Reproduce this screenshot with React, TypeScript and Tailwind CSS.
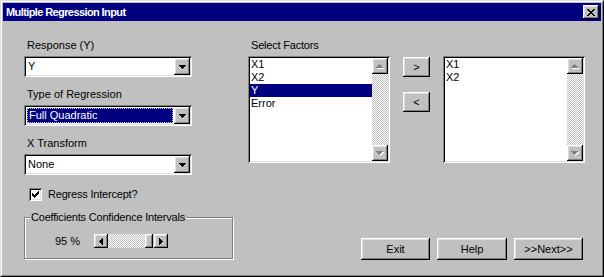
import React from "react";

const raised =
  "bg-[#c0c0c0] shadow-[inset_-1px_-1px_#000,inset_1px_1px_#fff,inset_-2px_-2px_#808080,inset_2px_2px_#dfdfdf]";
const sunken =
  "shadow-[inset_1px_1px_#808080,inset_-1px_-1px_#fff,inset_2px_2px_#000,inset_-2px_-2px_#dfdfdf]";
const dither =
  "bg-[image:repeating-conic-gradient(#fff_0%_25%,#c0c0c0_0%_50%)] bg-[length:2px_2px]";

const Pix = ({ w, h, d, color = "#000", shadow }: { w: number; h: number; d: string; color?: string; shadow?: boolean }) => (
  <svg width={w + (shadow ? 1 : 0)} height={h + (shadow ? 1 : 0)} viewBox={`0 0 ${w + (shadow ? 1 : 0)} ${h + (shadow ? 1 : 0)}`} shapeRendering="crispEdges">
    {shadow && <path d={d} fill="#fff" transform="translate(1 1)" />}
    <path d={d} fill={color} />
  </svg>
);

const DOWN = "M0 0h7v1H0zM1 1h5v1H1zM2 2h3v1H2zM3 3h1v1H3z";
const UP = "M3 0h1v1H3zM2 1h3v1H2zM1 2h5v1H1zM0 3h7v1H0z";
const LEFT = "M0 3h1v1H0zM1 2h1v3H1zM2 1h1v5H2zM3 0h1v7H3z";
const RIGHT = "M0 0h1v7H0zM1 1h1v5H1zM2 2h1v3H2zM3 3h1v1H3z";
const CLOSE =
  "M0 0h2v1H0zM6 0h2v1H6zM1 1h2v1H1zM5 1h2v1H5zM2 2h4v1H2zM3 3h2v1H3zM2 4h4v1H2zM1 5h2v1H1zM5 5h2v1H5zM0 6h2v1H0zM6 6h2v1H6z";
const CHECK =
  "M6 0h1v1H6zM5 1h2v1H5zM0 2h1v1H0zM4 2h3v1H4zM0 3h2v1H0zM3 3h3v1H3zM0 4h5v1H0zM1 5h3v1H1zM2 6h1v1H2z";

const Combo = ({ text, selected }: { text: string; selected?: boolean }) => (
  <div className={`w-[168px] h-[21px] bg-white p-[2px] flex ${sunken}`}>
    <div className="flex-1 flex p-px">
      {selected ? (
        <div className="flex-1 flex items-center bg-[#000080] text-white border border-dotted border-[#c0c0c0] pl-[1px]">
          {text}
        </div>
      ) : (
        <div className="flex-1 flex items-center pl-[1px]">{text}</div>
      )}
    </div>
    <div className={`w-[16px] h-full flex items-center justify-center ${raised}`}>
      <Pix w={7} h={4} d={DOWN} />
    </div>
  </div>
);

const ListBox = ({ items, selected }: { items: string[]; selected?: string }) => (
  <div className={`w-[142px] h-[107px] bg-white p-[2px] flex ${sunken}`}>
    <div className="flex-1 flex flex-col">
      {items.map((it) => (
        <div
          key={it}
          className={`h-[13px] leading-[13px] pl-px ${it === selected ? "bg-[#000080] text-white" : ""}`}
        >
          {it}
        </div>
      ))}
    </div>
    <div className="w-[16px] flex flex-col">
      <div className={`h-[16px] flex items-center justify-center ${raised}`}>
        <Pix w={7} h={4} d={UP} color="#808080" shadow />
      </div>
      <div className={`flex-1 ${dither}`} />
      <div className={`h-[16px] flex items-center justify-center ${raised}`}>
        <Pix w={7} h={4} d={DOWN} color="#808080" shadow />
      </div>
    </div>
  </div>
);

const Button = ({ label, className = "" }: { label: string; className?: string }) => (
  <div className={`flex items-center justify-center ${raised} ${className}`}>{label}</div>
);

export default function App() {
  return (
    <div className="w-[604px] h-[277px] bg-[#c0c0c0] border border-t-[#dfdfdf] border-l-[#dfdfdf] border-r-black border-b-black font-['Liberation_Sans',Arial,sans-serif] text-[11px] text-black select-none">
      <div className="h-full border border-t-white border-l-white border-r-[#808080] border-b-[#808080] p-px flex flex-col">
        {/* title bar */}
        <div className="h-[18px] bg-[#000080] flex items-center justify-between pl-[3px] pr-[2px]">
          <span className="text-white font-bold text-[11px] tracking-[-0.6px]">Multiple Regression Input</span>
          <div className={`w-[16px] h-[14px] flex items-center justify-center ${raised}`}>
            <Pix w={8} h={7} d={CLOSE} />
          </div>
        </div>

        {/* body */}
        <div className="flex-1 flex pl-[21px] pt-[18px]">
          {/* left column */}
          <div className="w-[209px] flex flex-col">
            <div className="h-[13px] leading-[13px] pl-[3px]">Response (Y)</div>
            <div className="mt-[4px]">
              <Combo text="Y" />
            </div>
            <div className="mt-[11px] h-[13px] leading-[13px] pl-[3px]">Type of Regression</div>
            <div className="mt-[4px]">
              <Combo text="Full Quadratic" selected />
            </div>
            <div className="mt-[11px] h-[13px] leading-[13px] pl-[3px]">X Transform</div>
            <div className="mt-[4px]">
              <Combo text="None" />
            </div>

            <div className="mt-[13px] flex items-center pl-[5px] h-[13px]">
              <div className={`w-[13px] h-[13px] bg-white flex items-center justify-center ${sunken}`}>
                <Pix w={7} h={7} d={CHECK} />
              </div>
              <span className="ml-[6px] tracking-[-0.2px]">Regress Intercept?</span>
            </div>

            <div className="mt-[16px] relative h-[42px] border border-[#808080] shadow-[inset_1px_1px_#fff,1px_1px_#fff]">
              <span className="absolute -top-[7px] left-[5px] px-px bg-[#c0c0c0] leading-[13px] tracking-[-0.2px]">
                Coefficients Confidence Intervals
              </span>
              <div className="flex items-center pl-[30px] pt-[16px]">
                <span className="w-[39px] leading-[13px]">95 %</span>
                <div className="flex h-[14px] w-[74px]">
                  <div className={`w-[14px] flex items-center justify-center ${raised}`}>
                    <Pix w={4} h={7} d={LEFT} />
                  </div>
                  <div className={`flex-1 ${dither}`} />
                  <div className={`w-[8px] ${raised}`} />
                  <div className={`w-[14px] ml-px flex items-center justify-center ${raised}`}>
                    <Pix w={4} h={7} d={RIGHT} />
                  </div>
                </div>
              </div>
            </div>
          </div>

          {/* right column */}
          <div className="ml-[15px] flex flex-col">
            <div className="h-[13px] leading-[13px] pl-[3px] tracking-[-0.2px]">Select Factors</div>
            <div className="mt-[4px] flex">
              <ListBox items={["X1", "X2", "Y", "Error"]} selected="Y" />
              <div className="ml-[13px] w-[27px] flex flex-col">
                <Button label=">" className="mt-px h-[20px]" />
                <Button label="<" className="mt-[15px] h-[20px]" />
              </div>
              <div className="ml-[13px]">
                <ListBox items={["X1", "X2"]} />
              </div>
            </div>
            <div className="mt-[75px] ml-[113px] flex gap-[7px]">
              <Button label="Exit" className="w-[69px] h-[22px]" />
              <Button label="Help" className="w-[70px] h-[22px]" />
              <Button label=">>Next>>" className="w-[69px] h-[22px]" />
            </div>
          </div>
        </div>
      </div>
    </div>
  );
}
